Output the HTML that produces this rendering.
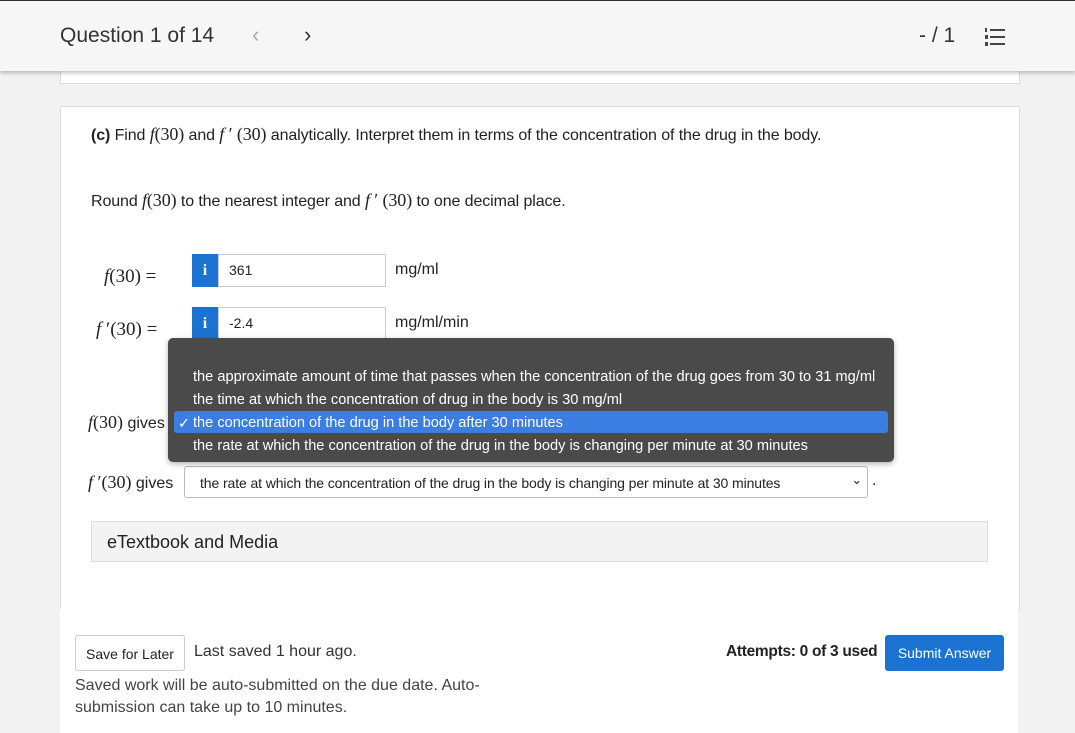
<!DOCTYPE html>
<html><head><style>
body{margin:0;width:1075px;height:733px;background:#f2f2f2;font-family:"Liberation Sans",sans-serif;color:#222;position:relative;overflow:hidden}
.abs{position:absolute}
.serif{font-family:"Liberation Serif",serif;font-style:italic}
.m{font-family:"Liberation Serif",serif}
</style></head><body>
<div class="abs" style="left:0;top:0;width:1075px;height:1px;background:#333"></div>
<div class="abs" style="left:0;top:1px;width:1075px;height:70px;background:#f6f6f6;box-shadow:0 2px 4px rgba(0,0,0,.25);z-index:2"></div>
<div class="abs" style="left:60px;top:24px;font-size:21px;color:#333;z-index:3">Question 1 of 14</div>
<div class="abs" style="left:252px;top:22px;font-size:22px;color:#aaa;z-index:3">&lsaquo;</div>
<div class="abs" style="left:304px;top:22px;font-size:22px;color:#333;z-index:3">&rsaquo;</div>
<div class="abs" style="left:919px;top:24px;font-size:21px;color:#333;z-index:3">- / 1</div>
<svg class="abs" style="left:984px;top:27px;z-index:3" width="22" height="20"><g fill="#444"><rect x="6" y="2" width="15" height="2"/><rect x="6" y="9" width="15" height="2"/><rect x="6" y="16" width="15" height="2"/><rect x="1" y="1" width="2" height="4"/><rect x="1" y="8" width="3" height="4"/><rect x="1" y="15" width="3" height="4"/></g></svg>
<div class="abs" style="left:60px;top:60px;width:958px;height:22px;background:#fff;border:1px solid #ddd"></div>
<div class="abs" style="left:60px;top:106px;width:958px;height:502px;background:#fff;border:1px solid #ddd"></div>
<div class="abs" style="left:60px;top:609px;width:958px;height:124px;background:#fff"></div>
<div class="abs" style="left:91px;top:124px;font-size:16px;letter-spacing:-0.1px"><b>(c)</b> Find <span class="serif" style="font-size:18px">f</span><span class="m" style="font-size:18px">(30)</span> and <span class="serif" style="font-size:18px">f</span><span class="m" style="font-size:18px"> ′ (30)</span> analytically. Interpret them in terms of the concentration of the drug in the body.</div>
<div class="abs" style="left:91px;top:190px;font-size:16px;letter-spacing:-0.1px">Round <span class="serif" style="font-size:18px">f</span><span class="m" style="font-size:18px">(30)</span> to the nearest integer and <span class="serif" style="font-size:18px">f</span><span class="m" style="font-size:18px"> ′ (30)</span> to one decimal place.</div>
<div class="abs" style="left:104px;top:266px;font-size:19px"><span class="serif">f</span><span class="m">(30) =</span></div>
<div class="abs" style="left:96px;top:319px;font-size:19px"><span class="serif">f</span><span class="m"> ′(30) =</span></div>
<div class="abs" style="left:192px;top:254px;width:26px;height:33px;background:#1a73d0;color:#fff;font-weight:bold;text-align:center;line-height:33px;font-family:'Liberation Serif',serif;font-size:16px">i</div>
<div class="abs" style="left:218px;top:254px;width:168px;height:33px;border:1px solid #ccc;font-size:14px;line-height:31px;padding-left:10px;box-sizing:border-box">361</div>
<div class="abs" style="left:395px;top:261px;font-size:16px">mg/ml</div>
<div class="abs" style="left:192px;top:307px;width:26px;height:33px;background:#1a73d0;color:#fff;font-weight:bold;text-align:center;line-height:33px;font-family:'Liberation Serif',serif;font-size:16px">i</div>
<div class="abs" style="left:218px;top:307px;width:168px;height:33px;border:1px solid #ccc;font-size:14px;line-height:31px;padding-left:10px;box-sizing:border-box">-2.4</div>
<div class="abs" style="left:395px;top:314px;font-size:16px">mg/ml/min</div>
<div class="abs" style="left:88px;top:412px;font-size:16px"><span class="serif" style="font-size:18px">f</span><span class="m" style="font-size:18px">(30)</span> gives</div>
<div class="abs" style="left:88px;top:472px;font-size:16px"><span class="serif" style="font-size:18px">f</span><span class="m" style="font-size:18px"> ′(30)</span> gives</div>
<div class="abs" style="left:184px;top:466px;width:684px;height:32px;border:1px solid #bbb;border-radius:3px;font-size:14px;line-height:32px;padding-left:15px;box-sizing:border-box;letter-spacing:-0.1px">the rate at which the concentration of the drug in the body is changing per minute at 30 minutes<span style="position:absolute;right:5px;top:-3px;font-size:13px">&#8964;</span></div>
<div class="abs" style="left:872px;top:472px;font-size:16px">.</div>
<div class="abs" style="left:168px;top:338px;width:726px;height:124px;background:#4a4a4a;border-radius:5px;box-shadow:0 2px 6px rgba(0,0,0,.3);color:#fff;font-size:14.6px;z-index:5">
<div class="abs" style="left:25px;top:31px">the approximate amount of time that passes when the concentration of the drug goes from 30 to 31 mg/ml</div>
<div class="abs" style="left:25px;top:54px">the time at which the concentration of drug in the body is 30 mg/ml</div>
<div class="abs" style="left:6px;top:73px;width:714px;height:22px;background:#3b7de0;border-radius:3px"></div>
<div class="abs" style="left:10px;top:77px">✓</div>
<div class="abs" style="left:25px;top:77px">the concentration of the drug in the body after 30 minutes</div>
<div class="abs" style="left:25px;top:100px">the rate at which the concentration of the drug in the body is changing per minute at 30 minutes</div>
</div>
<div class="abs" style="left:91px;top:521px;width:897px;height:41px;background:#f3f3f3;border:1px solid #ddd;font-size:18px;line-height:40px;padding-left:15px;box-sizing:border-box">eTextbook and Media</div>
<div class="abs" style="left:75px;top:635px;width:110px;height:36px;border:1px solid #ccc;border-radius:3px;font-size:14px;line-height:36px;text-align:center;box-sizing:border-box">Save for Later</div>
<div class="abs" style="left:194px;top:643px;font-size:16px;color:#333">Last saved 1 hour ago.</div>
<div class="abs" style="left:75px;top:675px;font-size:16px;color:#444;line-height:22px">Saved work will be auto-submitted on the due date. Auto-<br>submission can take up to 10 minutes.</div>
<div class="abs" style="left:726px;top:643px;font-size:15.5px;font-weight:bold;letter-spacing:-0.3px">Attempts: 0 of 3 used</div>
<div class="abs" style="left:885px;top:635px;width:119px;height:36px;background:#1a73d0;border-radius:3px;color:#fff;font-size:14px;line-height:36px;text-align:center">Submit Answer</div>
</body></html>
